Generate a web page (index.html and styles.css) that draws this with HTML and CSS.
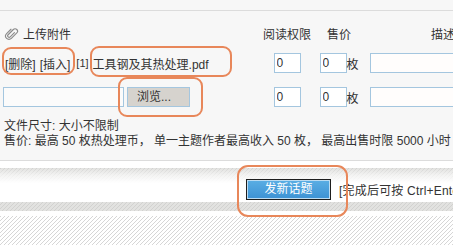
FILE: index.html
```html
<!DOCTYPE html>
<html lang="zh-CN">
<head>
<meta charset="utf-8">
<title>上传附件</title>
<link rel="stylesheet" href="styles.css">
</head>
<body>
<div class="panel">
  <div class="panel-top"></div>
  <div class="grid">
    <div class="c1 head-title">
      <svg class="clip" width="15" height="15" viewBox="0 0 16 16" aria-hidden="true">
        <g transform="rotate(45 8 8)" fill="none" stroke="#8a8a8a" stroke-width="1.2" stroke-linecap="round">
          <path d="M9.6 5.2v6.3a1.6 1.6 0 0 1-3.2 0V3.6a2.6 2.6 0 0 1 5.2 0v8.2a3.6 3.6 0 0 1-7.2 0V5.2"/>
        </g>
      </svg>
      <span>上传附件</span>
    </div>
    <div class="cc">阅读权限</div>
    <div class="cc">售价</div>
    <div class="cc">描述</div>

    <div class="c1 row-links">
      <a class="lnk">[删除]</a>
      <a class="lnk">[插入]</a>
      <span class="idx">[1]</span>
      <span class="fname">工具钢及其热处理.pdf</span>
    </div>
    <div class="cc"><input class="num" value="0"></div>
    <div class="cc price"><input class="num" value="0"><span>枚</span></div>
    <div class="cd"><input class="desc"></div>

    <div class="c1 row-file">
      <span class="filebox"></span>
      <span class="browse">浏览...</span>
    </div>
    <div class="cc"><input class="num" value="0"></div>
    <div class="cc price"><input class="num" value="0"><span>枚</span></div>
    <div class="cd"><input class="desc"></div>
  </div>
  <div class="notes">
    <p>文件尺寸: 大小不限制</p>
    <p>售价: 最高 50 枚热处理币， 单一主题作者最高收入 50 枚， 最高出售时限 5000 小时</p>
  </div>
</div>
<div class="gap"></div>
<div class="bar">
  <button class="submit">发新话题</button>
  <span class="hint">[完成后可按 Ctrl+Enter 发布]</span>
</div>
<div class="gap2"></div>
<div class="hatch"></div>

<div class="mark m1"></div>
<div class="mark m2"></div>
<div class="mark m3"></div>
<div class="mark m4"></div>
</body>
</html>
```

FILE: styles.css
```css
html, body {
  margin: 0;
  padding: 0;
  background: #fff;
  overflow: hidden;
  width: 453px;
  height: 245px;
}
body {
  position: relative;
  font-family: "Liberation Sans", "Noto Sans CJK SC", sans-serif;
  font-size: 12px;
  color: #333;
  white-space: nowrap;
}
.panel {
  background: #f7f7f7;
  border-bottom: 1px solid #dcdcdc;
  width: 600px;
}
.panel-top {
  height: 10px;
  border-bottom: 1px solid #dcdcdc;
}
.grid {
  display: grid;
  grid-template-columns: 262px 50px 54px 154px;
  grid-template-rows: 22px 38px 30px;
  align-items: center;
  padding-top: 11px;
}
.c1 {
  display: flex;
  align-items: center;
  padding-left: 3px;
}
.cc {
  display: flex;
  justify-content: center;
  align-items: center;
}
.cd {
  display: flex;
  align-items: center;
  padding-left: 4px;
}
.head-title .clip {
  margin-left: 1px;
  margin-right: 4px;
}
.row-links {
  padding-left: 5px;
}
.lnk {
  color: #333;
  margin-right: 4px;
}
.idx {
  font-size: 11px;
  margin-left: 2px;
  margin-right: 4px;
}
.num {
  width: 27px;
  height: 20px;
  box-sizing: border-box;
  border: 1px solid #a4c6df;
  background: #fff;
  padding: 0 2px;
  font-family: inherit;
  font-size: 12px;
  color: #333;
  margin: 0;
}
.price span {
  width: 12px;
}
.desc {
  width: 160px;
  height: 20px;
  box-sizing: border-box;
  border: 1px solid #a4c6df;
  background: #fffdfc;
  margin: 0;
}
.filebox {
  display: block;
  width: 121px;
  height: 20px;
  box-sizing: border-box;
  border: 1px solid #a4c6df;
  background: #fbfbfb;
}
.browse {
  display: block;
  margin-left: 3px;
  width: 63px;
  height: 20px;
  box-sizing: border-box;
  border: 1px solid #a4c6df;
  background: #d6d3ce;
  padding-left: 9px;
  line-height: 18px;
}
.notes {
  padding: 7px 0 11px 4px;
}
.notes p {
  margin: 0;
  line-height: 15px;
}
.gap {
  height: 7px;
}
.bar {
  width: 600px;
  height: 43px;
  display: flex;
  align-items: center;
  padding-left: 246px;
  box-sizing: border-box;
  background:
    linear-gradient(to bottom, rgba(255,255,255,0) 0, rgba(255,255,255,0.6) 7px, #fff 15px, #fff 34px, rgba(255,255,255,0) 34px),
    repeating-linear-gradient(135deg, #d2d2d0 0 1px, #e2e2e0 1px 2.83px);
}
.submit {
  flex-shrink: 0;
  width: 85px;
  height: 21px;
  margin: 0;
  padding: 0;
  border: 1px solid #1e1e1e;
  box-shadow: inset 0 0 0 1px #bcdcf2;
  background: linear-gradient(#5aaee4, #3d92d4);
  color: #fff;
  font-family: inherit;
  font-size: 12px;
  line-height: 19px;
}
.hint {
  flex-shrink: 0;
  margin-left: 8px;
  letter-spacing: 0.2px;
}
.gap2 {
  height: 5px;
}
.hatch {
  height: 40px;
  background: repeating-linear-gradient(135deg, #d6d6d6 0 1px, #fff 1px 2.83px);
}
.mark {
  position: absolute;
  box-sizing: border-box;
  border: 2px solid #e8875a;
  border-radius: 9px;
}
.m1 { left: 2px; top: 47px; width: 73px; height: 28px; }
.m2 { left: 90px; top: 46px; width: 142px; height: 31px; }
.m3 { left: 118px; top: 77px; width: 85px; height: 40px; }
.m4 { left: 237px; top: 165px; width: 111px; height: 52px; border-radius: 11px; }
```
